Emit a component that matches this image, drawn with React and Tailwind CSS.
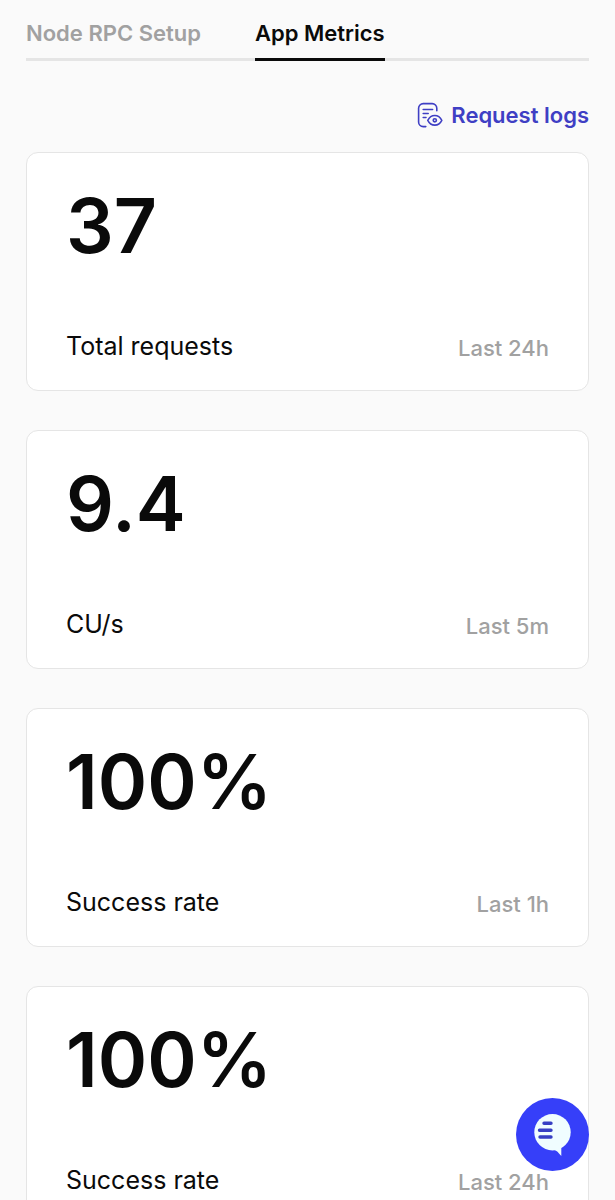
import React from 'react'

const metrics = [
  { id: 'total', value: '37', label: 'Total requests', period: 'Last 24h' },
  { id: 'cus', value: '9.4', label: 'CU/s', period: 'Last 5m' },
  { id: 'success-1h', value: '100%', label: 'Success rate', period: 'Last 1h' },
  { id: 'success-24h', value: '100%', label: 'Success rate', period: 'Last 24h' },
]

const LogsIcon = () => (
  <svg
    className="w-[26px] h-[26px] shrink-0"
    viewBox="0 0 26 26"
    fill="none"
    stroke="currentColor"
    strokeWidth="1.6"
    strokeLinecap="round"
    strokeLinejoin="round"
    aria-hidden="true"
  >
    <path d="M8.8 24.6H6.2A4.6 4.6 0 0 1 1.6 20V6.2a4.6 4.6 0 0 1 4.6-4.6h9a4.6 4.6 0 0 1 4.6 4.6v2.6" />
    <path d="M6.2 7.5h9.4M6.2 11.5h5M6.2 15.5h2.8" />
    <path d="M10.8 18.3c1.6-3.2 4-4.8 7-4.8s5.4 1.6 7 4.8c-1.6 3.2-4 4.8-7 4.800s-5.400-1.600-7-4.800z" />
    <circle cx="17.8" cy="18.3" r="1.6" />
  </svg>
)

const MetricCard = ({ value, label, period }) => (
  <section className="flex flex-col justify-between px-[39px] pt-[38px] pb-6 rounded-xl border border-neutral-200 bg-white">
    <p className="text-[75px] leading-[70px] font-semibold">{value}</p>
    <div className="flex items-end justify-between pt-[65px]">
      <h2 className="text-[25px] leading-10">{label}</h2>
      <span className="text-[22px] leading-9 font-medium text-neutral-400">{period}</span>
    </div>
  </section>
)

const App = () => {
  return (
    <div className="min-h-screen bg-neutral-50 text-neutral-950 font-['Inter',sans-serif]">
      <main className="px-[26px] pb-10">
        {/* Tabs */}
        <nav className="flex gap-[54px] border-b-3 border-neutral-200 text-[22px] leading-8 font-semibold">
          <a href="#setup" className="pt-[17px] pb-[9px] text-neutral-400">Node RPC Setup</a>
          <a href="#metrics" aria-current="page" className="-mb-[3px] pt-[17px] pb-[9px] border-b-3 border-neutral-950">
            App Metrics
          </a>
        </nav>

        <div className="flex justify-end pt-[38px] pb-[21px]">
          <a href="#logs" className="flex items-center gap-2 text-[22px] leading-8 font-semibold text-[#3f3fc4]">
            <LogsIcon />
            Request logs
          </a>
        </div>

        <div className="flex flex-col gap-[39px]">
          {metrics.map((metric) => (
            <MetricCard
              key={metric.id}
              value={metric.value}
              label={metric.label}
              period={metric.period}
            />
          ))}
        </div>
      </main>

      {/* Chat launcher */}
      <button
        type="button"
        aria-label="Open chat"
        className="fixed bottom-[29px] right-[26px] size-[73px] rounded-full bg-[#363ff9]"
      >
        <svg className="size-full" viewBox="0 0 73 73" fill="none" aria-hidden="true">
          <circle cx="36.5" cy="34.2" r="18.2" fill="#f0fdff" />
          <path d="M37 52c3 0 4.500 1.500 8.300 6V48z" fill="#f0fdff" />
          <path d="M28 25.200h7M23.500 32.200h11.500M24 39h11" stroke="#363fc4" strokeWidth="3.400" strokeLinecap="round" />
        </svg>
      </button>
    </div>
  )
}

export default App
